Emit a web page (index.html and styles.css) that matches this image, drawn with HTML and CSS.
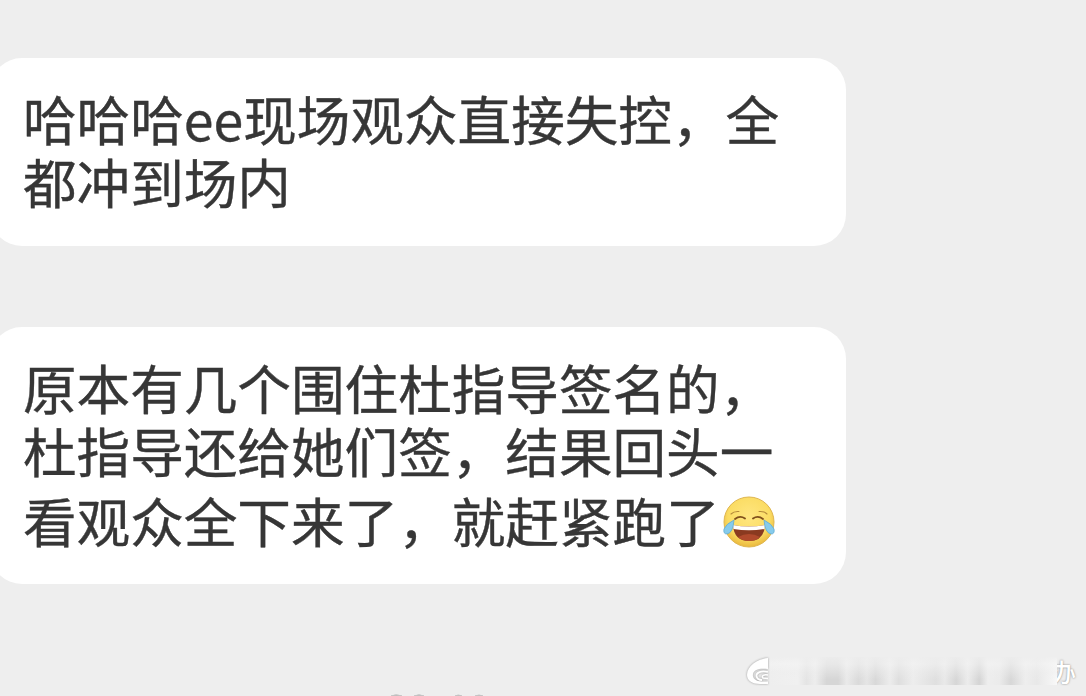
FILE: index.html
```html
<!DOCTYPE html>
<html lang="zh-CN">
<head>
  <meta charset="UTF-8">
  <meta name="viewport" content="width=device-width, initial-scale=1.0">
  <title>Chat</title>
  <link rel="stylesheet" href="styles.css">
</head>
<body>

  <main class="chat">
    <div class="bubble">
      <p>哈哈哈ee现场观众直接失控，全<br>都冲到场内</p>
    </div>

    <div class="bubble">
      <p>原本有几个围住杜指导签名的，<br>杜指导还给她们签，结果回头一<br>看观众全下来了，就赶紧跑了<svg class="emoji" viewBox="0 0 52 52" role="img" aria-label="joy">
        <defs>
          <radialGradient id="face" cx="50%" cy="40%" r="60%">
            <stop offset="0" stop-color="#ffe680"/>
            <stop offset="0.7" stop-color="#fbdc63"/>
            <stop offset="1" stop-color="#eab83c"/>
          </radialGradient>
        </defs>
        <circle cx="26" cy="26" r="25" fill="url(#face)" stroke="#dfb64f" stroke-width="1"/>
        <path d="M8 18 Q11 15 16 15.500 M36 15.500 Q41 15 44 18" fill="none" stroke="#b58a3a" stroke-width="1.100" stroke-linecap="round"/>
        <path d="M12 23 Q17 19 22 22.500 M30 22.500 Q35 19 40 23" fill="none" stroke="#80501c" stroke-width="1.800" stroke-linecap="round"/>
        <path d="M10 29 Q26 32 42 29 Q41 45 26 45 Q11 45 10 29Z" fill="#8a3a20"/>
        <path d="M10 29 Q26 32 42 29 L41.500 33 Q26 35.500 10.500 33Z" fill="#fff"/>
        <path d="M15 41 Q26 35 37 41 Q33 45 26 45 Q19 45 15 41Z" fill="#b04a2c"/>
        <path d="M11 24 Q3 28 1 33 Q0 38 4 38 Q10 37 11 24Z" fill="#86cbec" stroke="#62abd0" stroke-width="0.800"/>
        <path d="M41 24 Q49 28 51 33 Q52 38 48 38 Q42 37 41 24Z" fill="#86cbec" stroke="#62abd0" stroke-width="0.800"/>
      </svg></p>
    </div>

    <!-- top edge of the next timestamp -->
    <svg class="next-time" viewBox="0 0 110 6">
      <path d="M9 6 Q14 3.500 20 6Z M32 6 Q37 3.500 42 6Z M73 6 Q76 4 80 6Z M93 6 Q97 4 101 6Z" fill="#b5b5b5" stroke="#c4c4c4" stroke-width="1"/>
    </svg>
  </main>

  <div class="watermark">
    <svg class="logo" viewBox="0 0 24 30">
      <path d="M23 2 C12 3 2 10 2 19 C2 25 8 28 15 28 L23 28 L23 25.500 L17 25.500 C11 25.500 7 22 8 18 C9 13 15 12 23 13Z" fill="#fff"/>
      <path d="M23 16 C16 14 11 17 11.500 20 C12 23 15 24 17 24" fill="none" stroke="#fff" stroke-width="1.800"/>
      <path d="M23 19 C19 18 16 20 18 22 L23 22.500" fill="none" stroke="#fff" stroke-width="1.600"/>
    </svg>
    <span class="smear"></span>
    <span class="last"><span>办</span></span>
  </div>

</body>
</html>
```

FILE: styles.css
```css
body {
  margin: 0;
  height: 696px;
  overflow: hidden;
  position: relative;
  background-color: #eee;
  font-family: "Noto Sans CJK SC", sans-serif;
  color: #363636;
}

.chat {
  display: flex;
  flex-direction: column;
  align-items: flex-start;
  gap: 81px;
  padding-top: 58px;
}

.bubble {
  box-sizing: border-box;
  width: 856px;
  margin-left: -10px;
  padding: 29px 0 34px 33px;
  background-color: #fff;
  border-radius: 32px;
}

.bubble p {
  margin: 0;
  font-size: 53.6px;
  line-height: 62.5px;
  white-space: nowrap;
  -webkit-text-stroke: 0.4px #363636;
}

.bubble + .bubble {
  padding-bottom: 32px;
}

.emoji {
  width: 52px;
  height: 52px;
  margin: 15px 0 0 3px;
  vertical-align: -5px;
}

.next-time {
  width: 110px;
  height: 6px;
  margin: 25px 0 0 382px;
}

.bubble + .next-time {
  margin-top: 25px;
}

/* Watermark lies over the chat */
.watermark {
  position: absolute;
  left: 745px;
  top: 656px;
  display: flex;
  align-items: center;
  height: 30px;
}

.logo {
  width: 24px;
  height: 30px;
  filter: drop-shadow(0 0 1px #999);
}

.smear {
  width: 288px;
  height: 28px;
  background:
    linear-gradient(rgba(238, 238, 238, 0.9), rgba(244, 244, 244, 0.6) 25%, rgba(238, 238, 238, 0.35) 55%, rgba(238, 238, 238, 0) 80%),
    linear-gradient(90deg, #eeeeee 0%, #f0f0f0 10%, #e4e4e4 13%, #ededed 16%, #d6d6d6 20%, #d6d6d6 24%, #eaeaea 27%, #dadada 31%, #e5e5e5 34%, #d8d8d8 37%, #ececec 42%, #dedede 45%, #ededed 50%, #dfdfdf 58%, #e9e9e9 61%, #d6d6d6 65%, #ececec 69%, #d4d4d4 73%, #eeeeee 76%, #ebebeb 80%, #d7d7d7 84%, #eeeeee 89%, #e8e8e8 93%, #f8f8f8 100%);
}

.last {
  width: 22px;
  overflow: hidden;
}

.last span {
  display: block;
  margin-left: -6px;
  color: #fff;
  font-size: 25px;
  font-weight: 500;
  line-height: 30px;
  text-shadow: 0 0 2px #777;
}
```
